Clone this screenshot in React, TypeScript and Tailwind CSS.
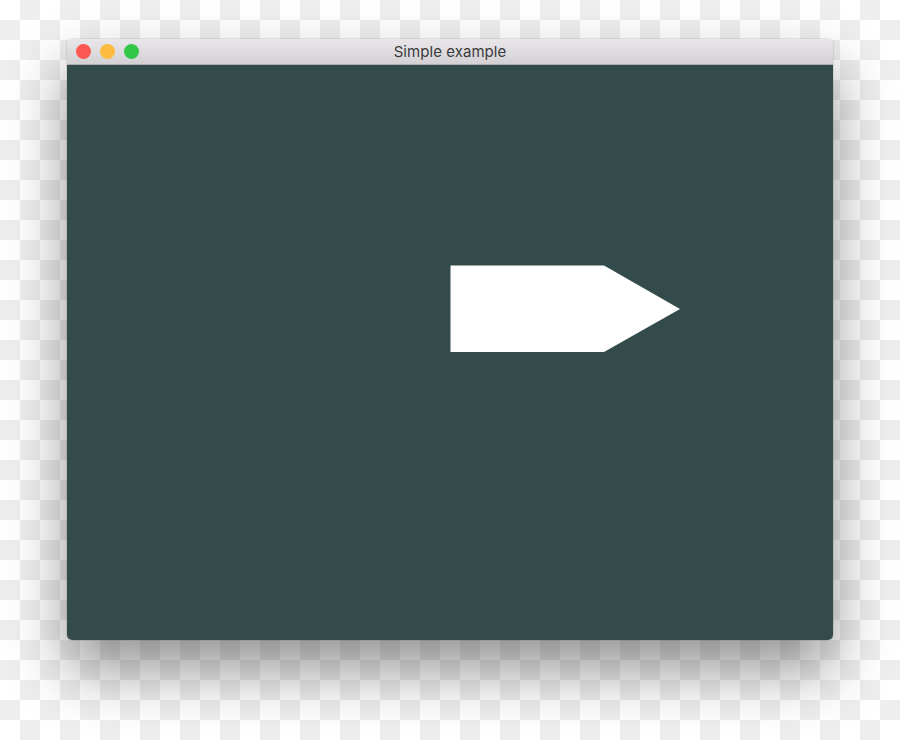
export default function App() {
  return (
    <div className="w-[900px] h-[740px] overflow-hidden pl-[67px] pt-[39px] bg-white bg-[repeating-conic-gradient(#eeeeee_0_25%,#ffffff_0_50%)] bg-[length:40px_40px]">
      <div className="w-[766px] h-[601px] flex flex-col rounded-[5px] overflow-hidden shadow-[0_0_0_1px_rgba(0,0,0,0.08),0_30px_60px_rgba(0,0,0,0.42)]">
        <div className="relative h-[26px] shrink-0 flex items-center gap-[9px] pl-[9px] bg-gradient-to-b from-[#e9e7e9] to-[#d3d1d3] border-b border-[#b0aeb0]">
          <span className="w-[15px] h-[15px] rounded-full bg-[#fc5753]"></span>
          <span className="w-[15px] h-[15px] rounded-full bg-[#fdbc40]"></span>
          <span className="w-[15px] h-[15px] rounded-full bg-[#33c748]"></span>
          <span className="absolute inset-0 pt-[2px] flex items-center justify-center text-[15px] tracking-[0.05px] text-[#3a3a3c] font-['Inter',sans-serif]">
            Simple example
          </span>
        </div>
        <div className="flex-1 bg-[#334c4b] pl-[383px] pt-[200px]">
          <svg width="231" height="88" viewBox="0 0 231 88" className="block">
            <polygon points="0.5,0.5 154,0.5 230,44 154,87 0.5,87" fill="#ffffff" />
          </svg>
        </div>
      </div>
    </div>
  );
}
